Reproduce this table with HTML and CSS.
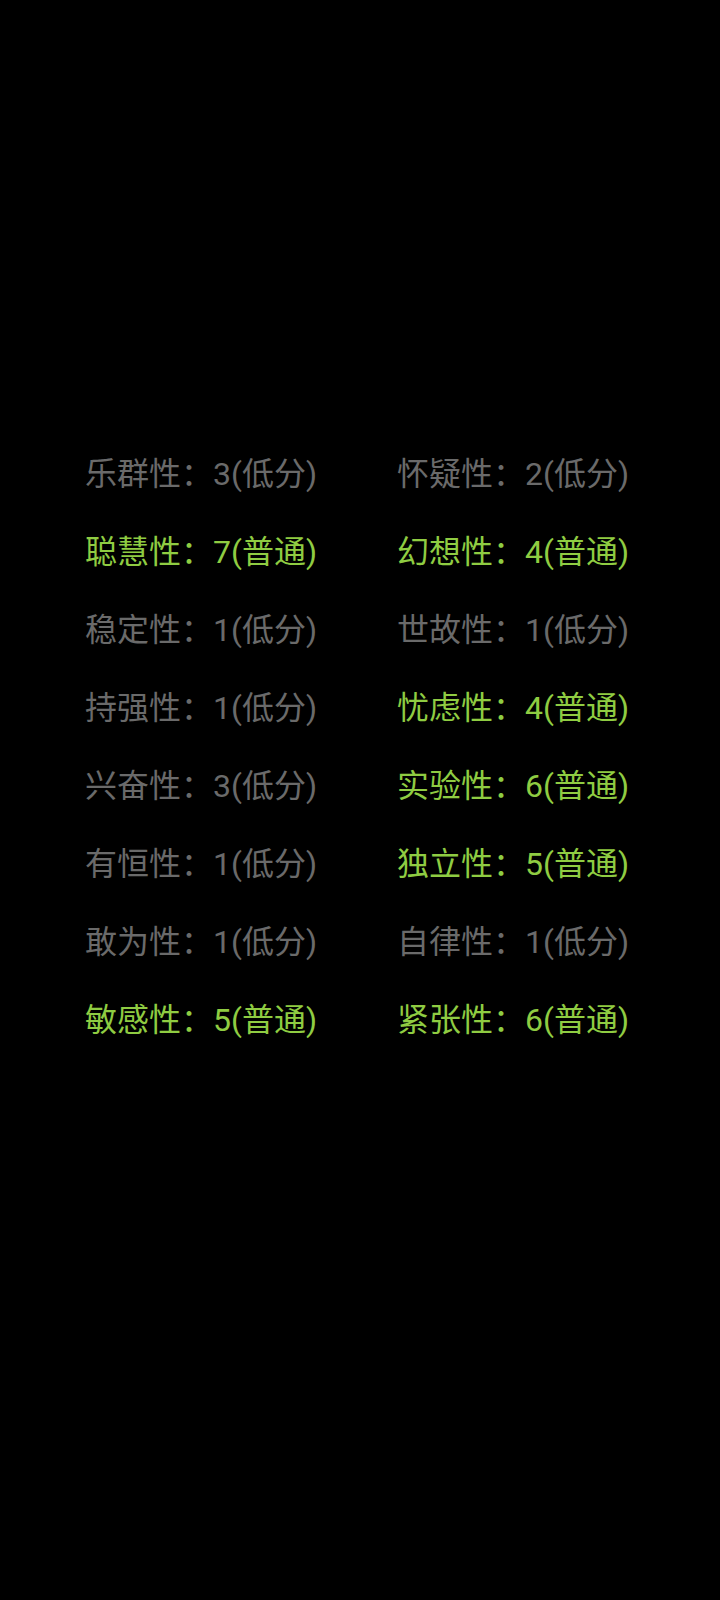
FILE: index.html
```html
<!DOCTYPE html>
<html lang="zh">
<head>
<meta charset="utf-8">
<link rel="stylesheet" href="styles.css">
</head>
<body>
<div class="grid">
  <div class="item low">乐群性：3(低分)</div>
  <div class="item low">怀疑性：2(低分)</div>
  <div class="item mid">聪慧性：7(普通)</div>
  <div class="item mid">幻想性：4(普通)</div>
  <div class="item low">稳定性：1(低分)</div>
  <div class="item low">世故性：1(低分)</div>
  <div class="item low">持强性：1(低分)</div>
  <div class="item mid">忧虑性：4(普通)</div>
  <div class="item low">兴奋性：3(低分)</div>
  <div class="item mid">实验性：6(普通)</div>
  <div class="item low">有恒性：1(低分)</div>
  <div class="item mid">独立性：5(普通)</div>
  <div class="item low">敢为性：1(低分)</div>
  <div class="item low">自律性：1(低分)</div>
  <div class="item mid">敏感性：5(普通)</div>
  <div class="item mid">紧张性：6(普通)</div>
</div>
</body>
</html>
```
FILE: styles.css
```css
html, body {
  margin: 0;
  padding: 0;
  background: #000;
}
body {
  width: 720px;
  height: 1600px;
  font-family: Roboto, "Noto Sans CJK SC", sans-serif;
}
.grid {
  display: grid;
  grid-template-columns: 312px 312px;
  padding: 435px 0 0 85px;
  row-gap: 0;
}
.item {
  font-size: 32px;
  line-height: 78px;
  white-space: nowrap;
}
.low { color: #6a6a6a; }
.mid { color: #8fcc42; }
```
